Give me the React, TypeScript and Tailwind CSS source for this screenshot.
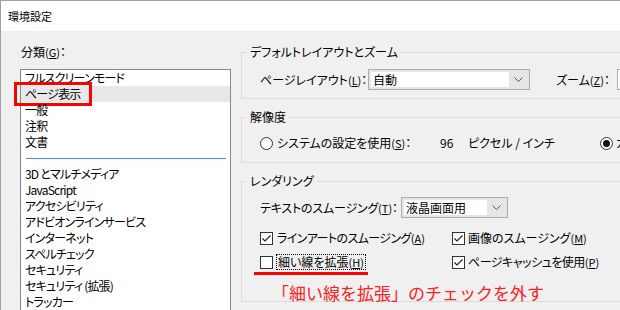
import React from "react";

const Chevron = () => (
  <svg width="9" height="6" viewBox="0 0 9 6" className="block">
    <polyline points="0.5,0.5 4.5,4.5 8.5,0.5" fill="none" stroke="#555" strokeWidth="1" />
  </svg>
);

const Select = ({ w, text }: { w: string; text: string }) => (
  <div className={`${w} h-[21px] border border-[#adadad] bg-[#e5e5e5] p-[2px] flex`}>
    <div className="flex-1 bg-white pl-[2px] leading-[15px] flex items-center">{text}</div>
    <div className="w-[18px] flex items-center justify-center">
      <Chevron />
    </div>
  </div>
);

const Check = ({ checked }: { checked: boolean }) => (
  <div className="w-[13px] h-[13px] border border-[#333] bg-white shrink-0 flex items-center justify-center">
    {checked && (
      <svg width="11" height="11" viewBox="0 0 11 11" className="block">
        <polyline points="1.5,5.5 4,8 9.5,2.5" fill="none" stroke="#222" strokeWidth="1.2" />
      </svg>
    )}
  </div>
);

const Radio = ({ checked }: { checked: boolean }) => (
  <div className="w-[13px] h-[13px] rounded-full border border-[#333] bg-white shrink-0 flex items-center justify-center">
    {checked && <div className="w-[7px] h-[7px] rounded-full bg-[#111]" />}
  </div>
);

const M = ({ k }: { k: string }) => (
  <span className="text-[11px] tracking-normal">
    (<u>{k}</u>)
  </span>
);

export default function App() {
  const listA = ["フルスクリーンモード", "ページ表示", "一般", "注釈", "文書"];
  const listB = [
    "3D とマルチメディア",
    "JavaScript",
    "アクセシビリティ",
    "アドビオンラインサービス",
    "インターネット",
    "スペルチェック",
    "セキュリティ",
    "セキュリティ (拡張)",
    "トラッカー",
  ];
  return (
    <div className="w-[620px] h-[310px] overflow-hidden border-t border-l border-[#a0a0a0] bg-[#f0f0f0] font-['Noto_Sans_CJK_JP',sans-serif] text-[12px] text-black [font-feature-settings:'palt'] flex flex-col">
      <div className="h-[30px] shrink-0 bg-white pl-[7px] flex items-center text-[11px]">環境設定</div>
      <div className="flex flex-1 min-h-0 overflow-hidden">
        {/* left column */}
        <div className="w-[240px] shrink-0 pl-[19px] flex flex-col">
          <div className="mt-[13px] leading-[16px] pl-[1px]">
            分類<M k="G" />：
          </div>
          <div className="mt-[9px] w-[211px] h-[260px] shrink-0 border border-[#828790] bg-white">
            {listA.map((t, i) => (
              <div
                key={t}
                className={`relative h-[16px] leading-[16px] pl-[4px] tracking-[-0.8px] ${i === 1 ? "bg-[#e8e8e8]" : ""}`}
              >
                {t}
                {i === 1 && (
                  <div className="absolute left-[-7px] top-[-4px] w-[78px] h-[24px] border-[3px] border-[#ff0000]" />
                )}
              </div>
            ))}
            <div className="h-[16px] flex items-center pl-[5px] pr-[4px]">
              <div className="h-[1px] w-full bg-[#4a90e2]" />
            </div>
            {listB.map((t) => (
              <div key={t} className="h-[16px] leading-[16px] pl-[4px] whitespace-nowrap tracking-[-0.8px]">
                {t}
              </div>
            ))}
          </div>
        </div>

        {/* right column */}
        <div className="flex flex-col pt-[13px]">
          <fieldset className="w-[420px] border border-[#dcdcdc] px-0">
            <legend className="ml-[5px] px-[3px] leading-[16px]">デフォルトレイアウトとズーム</legend>
            <div className="pl-[18px] pt-[9px] pb-[8px] flex items-center h-[38px]">
              <div className="w-[108px] whitespace-nowrap">
                ページレイアウト<M k="L" />：
              </div>
              <Select w="w-[162px]" text="自動" />
              <div className="ml-[26px] w-[61px] whitespace-nowrap">
                ズーム<M k="Z" />：
              </div>
              <div className="w-[60px] h-[21px] border border-[#adadad] bg-white shrink-0" />
            </div>
          </fieldset>

          <fieldset className="mt-[10px] w-[420px] border border-[#dcdcdc] px-0">
            <legend className="ml-[5px] px-[3px] leading-[16px]">解像度</legend>
            <div className="pl-[18px] pt-[10px] pb-[11px]">
              <div className="flex items-center h-[16px] whitespace-nowrap">
                <div className="w-[180px] flex items-center">
                  <Radio checked={false} />
                  <span className="ml-[4px]">
                    システムの設定を使用<M k="S" />：
                  </span>
                </div>
                <div className="w-[28px]">96</div>
                <div className="w-[132px]">ピクセル / インチ</div>
                <div className="flex items-center">
                  <Radio checked={true} />
                  <span className="ml-[3px]">カスタム解像度</span>
                </div>
              </div>
            </div>
          </fieldset>

          <fieldset className="mt-[10px] w-[420px] border border-[#dcdcdc] px-0">
            <legend className="ml-[5px] px-[3px] leading-[16px]">レンダリング</legend>
            <div className="pl-[18px] pt-[8px] pb-[0px]">
              <div className="flex items-center h-[21px]">
                <div className="w-[141px] whitespace-nowrap tracking-[-0.2px]">
                  テキストのスムージング<M k="T" />：
                </div>
                <Select w="w-[107px]" text="液晶画面用" />
              </div>
              <div className="mt-[12px] flex items-center h-[16px] whitespace-nowrap">
                <div className="w-[192px] flex items-center">
                  <Check checked={true} />
                  <span className="ml-[4px] tracking-[-0.6px]">
                    ラインアートのスムージング<M k="A" />
                  </span>
                </div>
                <div className="flex items-center">
                  <Check checked={true} />
                  <span className="ml-[3px]">
                    画像のスムージング<M k="M" />
                  </span>
                </div>
              </div>
              <div className="mt-[8px] flex items-center h-[16px] whitespace-nowrap">
                <div className="w-[192px] flex items-center">
                  <Check checked={false} />
                  <span className="ml-[3px] px-[1px] leading-[14px] border border-dotted border-black">
                    細い線を拡張<M k="H" />
                  </span>
                </div>
                <div className="flex items-center">
                  <Check checked={true} />
                  <span className="ml-[3px] tracking-[-0.5px]">
                    ページキャッシュを使用<M k="P" />
                  </span>
                </div>
              </div>
              <div className="mt-[2px] ml-[-6px] w-[114px] h-[3px] bg-[#ff0000]" />
              <div className="mt-[9px] ml-[12px] text-[17px] leading-[17px] text-[#ff2020] whitespace-nowrap [font-feature-settings:normal]">
                「細い線を拡張」のチェックを外す
              </div>
            </div>
          </fieldset>
        </div>
      </div>
    </div>
  );
}
